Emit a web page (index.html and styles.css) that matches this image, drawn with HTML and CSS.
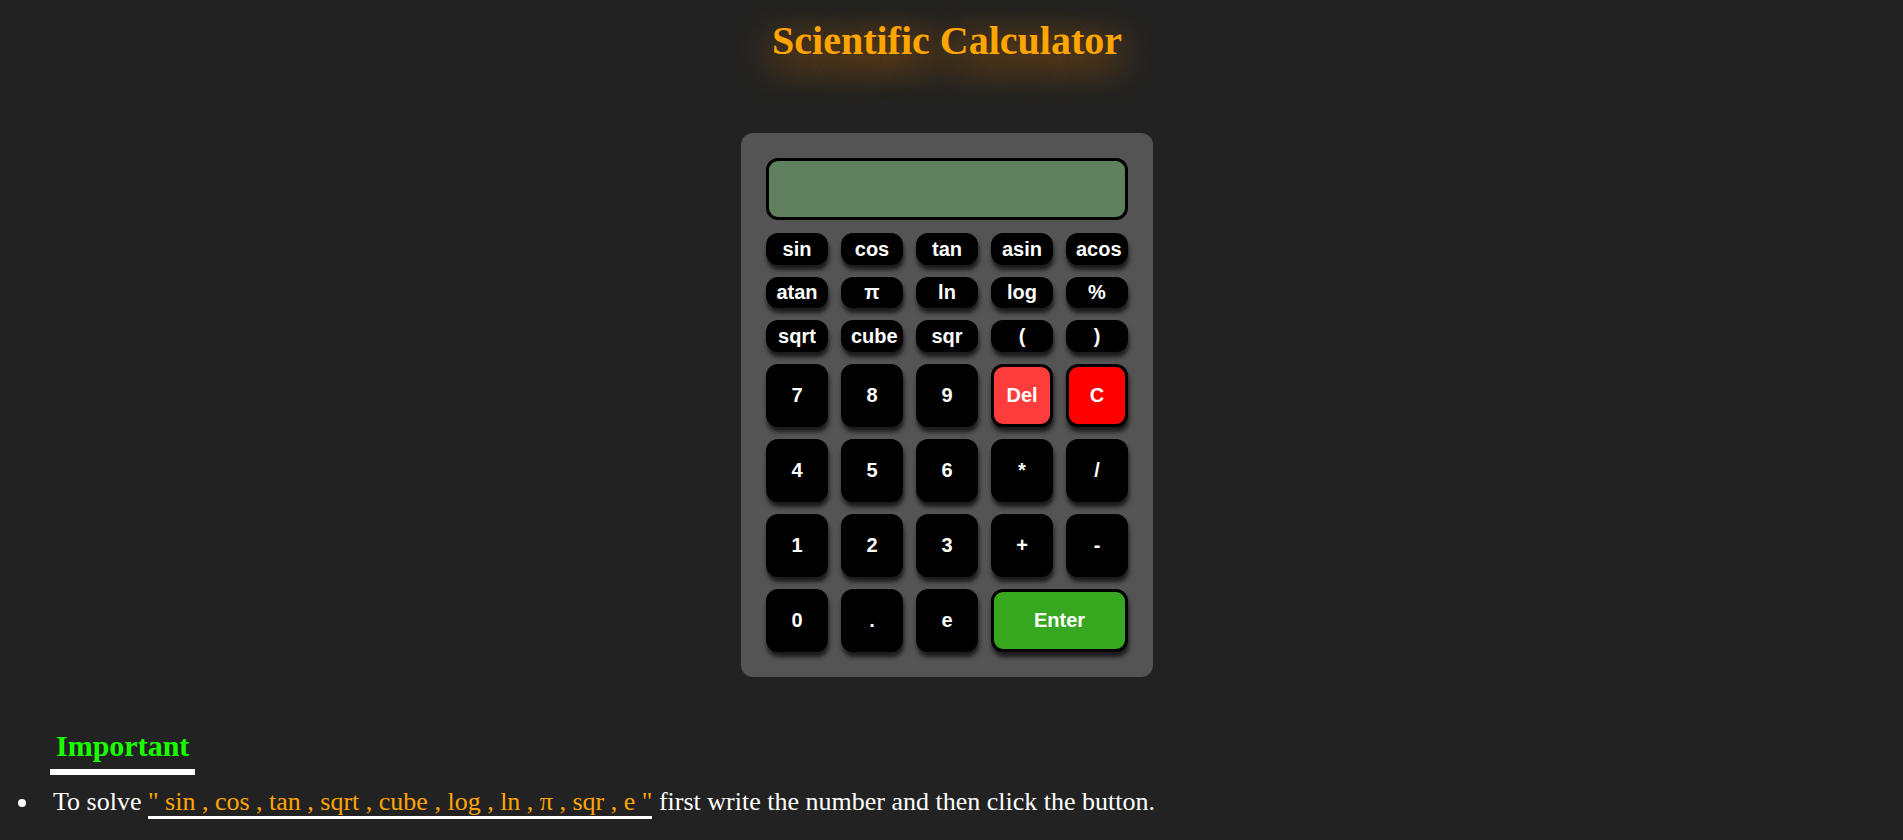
FILE: index.html
```html
<!DOCTYPE html>
<html lang="en">
<head>
<meta charset="utf-8">
<title>Scientific Calculator</title>
<link rel="stylesheet" href="styles.css">
</head>
<body>
<h1 class="title">Scientific Calculator</h1>
<main class="calculator">
  <input class="display" type="text" aria-label="Display" readonly>
  <button class="key">sin</button>
  <button class="key">cos</button>
  <button class="key">tan</button>
  <button class="key">asin</button>
  <button class="key">acos</button>
  <button class="key">atan</button>
  <button class="key">π</button>
  <button class="key">ln</button>
  <button class="key">log</button>
  <button class="key">%</button>
  <button class="key">sqrt</button>
  <button class="key">cube</button>
  <button class="key">sqr</button>
  <button class="key">(</button>
  <button class="key">)</button>
  <button class="key">7</button>
  <button class="key">8</button>
  <button class="key">9</button>
  <button class="key key-delete">Del</button>
  <button class="key key-clear">C</button>
  <button class="key">4</button>
  <button class="key">5</button>
  <button class="key">6</button>
  <button class="key">*</button>
  <button class="key">/</button>
  <button class="key">1</button>
  <button class="key">2</button>
  <button class="key">3</button>
  <button class="key">+</button>
  <button class="key">-</button>
  <button class="key">0</button>
  <button class="key">.</button>
  <button class="key">e</button>
  <button class="key key-enter">Enter</button>
</main>
<section class="notes">
  <h2 class="notes-title">Important</h2>
  <ul class="notes-list">
    <li class="note">To solve <span class="functions">" sin , cos , tan , sqrt , cube , log , ln , π , sqr , e "</span> first write the number and then click the button.</li>
  </ul>
</section>
</body>
</html>
```
FILE: styles.css
```css
* {
  box-sizing: border-box;
}

body {
  margin: 0;
  padding: 18px 9px 0 0;
  background: #222;
  color: #fff;
  font-family: "Liberation Serif", "Times New Roman", serif;
}

.title {
  margin: 0 0 69px;
  color: orange;
  font-size: 40px;
  line-height: 46px;
  text-align: center;
  text-shadow: 0 10px 40px #ff8400;
}

.calculator {
  display: grid;
  grid-template-columns: repeat(5, 62px);
  grid-template-rows: 63px 32px 31px 32px repeat(4, 63px);
  gap: 12px 13px;
  width: fit-content;
  margin: 0 auto;
  padding: 25px;
  border-radius: 12px;
  background: #545454;
}

.display {
  grid-column: 1 / -1;
  width: 100%;
  height: 62px;
  padding: 0 10px;
  border: 3px solid #000;
  border-radius: 12px;
  background: #5f805f;
  color: #000;
  font-family: "Liberation Sans", Arial, sans-serif;
  font-size: 30px;
  text-align: right;
}

.key {
  padding: 0 7px;
  border: 3px solid #000;
  border-radius: 12px;
  background: #000;
  box-shadow: 1px 5px 4px #1b1b1d;
  color: #fff;
  font-family: "Liberation Sans", Arial, sans-serif;
  font-size: 20px;
  font-weight: bold;
  cursor: pointer;
}

.key-delete {
  background: #ff3c3c;
}

.key-clear {
  background: #f00;
}

.key-enter {
  grid-column: span 2;
  background: #36a71e;
}

.notes {
  padding: 50px 0 18px;
}

.notes-title {
  width: fit-content;
  margin: 0 0 0 50px;
  padding: 2px 6px 6px;
  border-bottom: 6px solid #fff;
  color: #1aff00;
  font-size: 30px;
  line-height: 34px;
}

.notes-list {
  margin: 12px 0 0;
  padding-left: 40px;
}

.note {
  padding-left: 13px;
  font-size: 26px;
  line-height: 29px;
}

.functions {
  border-bottom: 3px solid #fff;
  color: orange;
}
```
